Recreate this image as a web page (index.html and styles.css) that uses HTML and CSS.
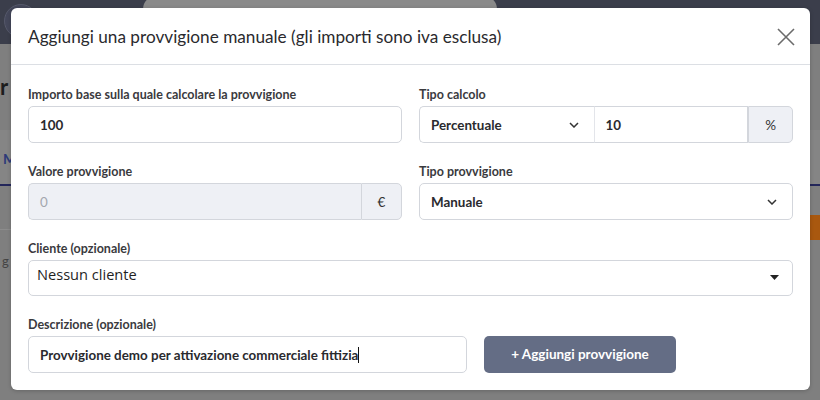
FILE: index.html
```html
<!DOCTYPE html>
<html lang="it">
<head>
<meta charset="utf-8">
<title>Aggiungi provvigione</title>
<link rel="stylesheet" href="styles.css">
</head>
<body>
<div class="page">
  <header class="nav">
    <div class="logo"></div>
    <div class="search"></div>
  </header>
  <div class="content">
    <div class="heading">r</div>
    <div class="tabs"><span class="tab">M</span></div>
    <div class="row-line"><div class="orange"></div></div>
    <div class="row-cell"><span class="cell-text">g</span></div>
  </div>
</div>

<div class="modal">
  <div class="modal-header">
    <h5 class="modal-title">Aggiungi una provvigione manuale (gli importi sono iva esclusa)</h5>
    <button class="close" aria-label="Chiudi">
      <svg width="18" height="18" viewBox="0 0 18 18"><path d="M1 1 L17 17 M17 1 L1 17" stroke="#6b6b6b" stroke-width="1.6" fill="none"/></svg>
    </button>
  </div>
  <div class="modal-body">
    <div class="grid">
      <div class="field">
        <label class="label">Importo base sulla quale calcolare la provvigione</label>
        <div class="control"><span class="val">100</span></div>
      </div>
      <div class="field">
        <label class="label">Tipo calcolo</label>
        <div class="group">
          <div class="control sel g-sel"><span class="val">Percentuale</span>
            <svg class="chev" width="10" height="6" viewBox="0 0 10 6"><path d="M1 1 L5 5 L9 1" stroke="#333" stroke-width="1.5" fill="none"/></svg>
          </div>
          <div class="control g-mid"><span class="val">10</span></div>
          <div class="addon g-end">%</div>
        </div>
      </div>
      <div class="field">
        <label class="label">Valore provvigione</label>
        <div class="group">
          <div class="control disabled g-start"><span class="val muted">0</span></div>
          <div class="addon g-end euro">€</div>
        </div>
      </div>
      <div class="field">
        <label class="label">Tipo provvigione</label>
        <div class="control sel"><span class="val">Manuale</span>
          <svg class="chev" width="10" height="6" viewBox="0 0 10 6"><path d="M1 1 L5 5 L9 1" stroke="#333" stroke-width="1.5" fill="none"/></svg>
        </div>
      </div>
      <div class="field full">
        <label class="label">Cliente (opzionale)</label>
        <div class="control select2"><span class="s2-val">Nessun cliente</span>
          <svg class="caret" width="9" height="5" viewBox="0 0 9 5"><path d="M0 0 L9 0 L4.5 5 Z" fill="#222"/></svg>
        </div>
      </div>
      <div class="field full">
        <label class="label">Descrizione (opzionale)</label>
        <div class="bottom">
          <div class="control desc"><span class="val">Provvigione demo per attivazione commerciale fittizia</span><span class="cursor"></span></div>
          <button class="btn">+ Aggiungi provvigione</button>
        </div>
      </div>
    </div>
  </div>
</div>
</body>
</html>
```
FILE: styles.css
```css
* { box-sizing: border-box; }
html, body { margin: 0; padding: 0; }
body {
  width: 820px;
  height: 400px;
  overflow: hidden;
  background: #7f7f7f;
  font-family: "Lato", "Open Sans", sans-serif;
  position: relative;
}
.page { width: 820px; height: 400px; }
.nav {
  height: 44px;
  background: #3b3e4b;
  display: flex;
  align-items: flex-start;
}
.logo {
  width: 34px; height: 34px;
  border-radius: 50%;
  border: 1px solid #55586a;
  margin: 4px 0 0 4px;
  background: #44475a;
}
.search {
  width: 354px; height: 26px;
  margin-left: 105px;
  margin-top: -4px;
  background: #8a8a8a;
  border-radius: 13px;
}
.content { background: #7f7f7f; }
.heading {
  height: 86px;
  padding-top: 29px;
  font: 700 22px "Lato", sans-serif;
  color: #1c1c1c;
}
.tabs {
  height: 56px;
  background: #858585;
  border-bottom: 2px solid #23265a;
  padding-top: 18px;
}
.tab { font: 700 14px "Lato", sans-serif; color: #2d3a78; padding-left: 3px; }
.row-line {
  height: 44px;
  border-bottom: 1px solid #8c8c8c;
  display: flex;
  justify-content: flex-end;
  padding-top: 29px;
}
.orange { width: 14px; height: 25px; background: #a9580f; }
.row-cell { height: 66px; padding-top: 20px; }
.cell-text { font: 13px "Lato", sans-serif; color: #444; padding-left: 2px; }

.modal {
  position: absolute;
  left: 11px; top: 8px;
  width: 799px; height: 382px;
  background: #fff;
  border-radius: 6px;
  box-shadow: 0 1px 4px rgba(0,0,0,0.2);
}
.modal-header {
  height: 57px;
  border-bottom: 1px solid #dcdfe4;
  display: flex;
  align-items: center;
  justify-content: space-between;
  padding: 0 15px 0 17px;
}
.modal-title {
  margin: 0;
  font: 400 17.2px "Lato", sans-serif;
  color: #2a2a2e;
}
.close {
  background: none; border: 0; padding: 0;
  width: 18px; height: 18px;
  display: flex;
  margin-top: 2px;
}
.modal-body { padding: 22px 17px 0 17px; }
.grid {
  display: grid;
  grid-template-columns: 374px 374px;
  column-gap: 17px;
}
.field { margin-bottom: 21px; }
.full { grid-column: 1 / 3; }
.label {
  display: block;
  height: 16px;
  margin-bottom: 3px;
  font: 700 12.5px/16px "Lato", sans-serif;
  color: #3a3a3e;
}
.control {
  height: 37px;
  border: 1px solid #d3d6dc;
  border-radius: 5px;
  display: flex;
  align-items: center;
  padding: 0 11px;
  background: #fff;
}
.val {
  font: 700 13.4px "Lato", sans-serif;
  color: #2a2a2e;
}
.muted { color: #a3a7ae; font-weight: 400; }
.sel { justify-content: space-between; padding-right: 15px; }
.chev { display: block; }
.group { display: flex; }
.g-sel { width: 175px; border-radius: 5px 0 0 5px; border-right: 0; }
.g-mid { width: 155px; border-radius: 0; border-left: 1px solid #e3e5ea; }
.g-start { flex: 1; border-radius: 5px 0 0 5px; }
.addon {
  height: 37px;
  border: 1px solid #d3d6dc;
  background: #eef0f5;
  display: flex; align-items: center; justify-content: center;
  font: 400 13.5px "Lato", sans-serif;
  color: #333;
}
.g-end { width: 45px; border-radius: 0 5px 5px 0; }
.euro { width: 41px; }
.disabled { background: #eef0f5; border-right: 0; }
.select2 {
  height: 36px;
  justify-content: space-between;
  padding: 0 12px 0 8px;
}
.s2-val {
  font: 400 14.6px "Open Sans", sans-serif;
  color: #1f1f1f;
  margin-top: -9px;
}
.caret { display: block; margin-top: -2px; margin-right: 1px; }
.bottom { display: flex; gap: 17px; }
.desc { width: 439px; }
.cursor {
  display: inline-block;
  width: 1px; height: 16px;
  background: #111;
}
.btn {
  width: 192px; height: 37px;
  background: #646d85;
  border: 0;
  border-radius: 5px;
  color: #fff;
  font: 700 13.5px "Lato", sans-serif;
  padding: 0 0 1px 0;
}
```
